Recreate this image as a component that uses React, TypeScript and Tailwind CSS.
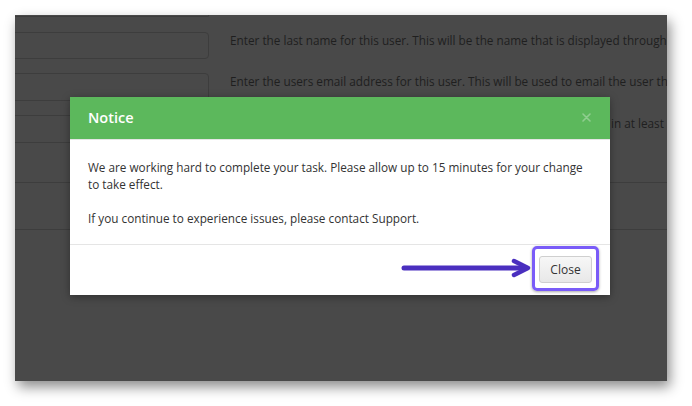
import React from "react";

export default function App() {
  const font = { fontFamily: '"Open Sans", "Liberation Sans", sans-serif' };
  return (
    <div className="w-[692px] h-[406px] bg-white overflow-hidden pt-[15px] pl-[15px]" style={font}>
      <div className="relative w-[652px] h-[366px] overflow-hidden bg-[#494949] shadow-[3px_6px_12px_rgba(0,0,0,0.45)]">
        {/* dimmed form */}
        <div className="flex flex-col text-[11.75px] leading-[17px] text-[#1f1f1f]">
          <div className="h-[17px]">
            <div className="w-[194px] h-[2px] border-b border-r border-[#3d3d3d] rounded-br-[4px]" />
          </div>
          <div className="flex items-start h-[27px]">
            <div className="w-[198px] -ml-[4px] h-[27px] shrink-0 border border-[#3d3d3d] rounded-[4px]" />
            <div className="ml-[21px] whitespace-nowrap">
              Enter the last name for this user. This will be the name that is displayed throughout the application.
            </div>
          </div>
          <div className="flex items-start h-[28px] mt-[14px]">
            <div className="w-[198px] -ml-[4px] h-[28px] shrink-0 border border-[#3d3d3d] rounded-[4px]" />
            <div className="ml-[21px] whitespace-nowrap">
              Enter the users email address for this user. This will be used to email the user their login details.
            </div>
          </div>
          <div className="flex items-start h-[28px] mt-[14px]">
            <div className="w-[198px] -ml-[4px] h-[28px] shrink-0 border border-[#3d3d3d] rounded-[4px]" />
            <div className="ml-[21px] whitespace-nowrap flex">
              <span className="inline-block w-[381px] overflow-hidden">Enter a password for this user. The password must conta</span>
              <span>in at least one number.</span>
            </div>
          </div>
          <div className="mt-[39px] border-t border-[#3d3d3d]" />
          <div className="mt-[46px] border-t border-[#3d3d3d]" />
        </div>

        {/* modal */}
        <div className="absolute left-[55px] top-[82px] w-[540px] bg-white shadow-[0_2px_8px_rgba(0,0,0,0.35)]">
          <div className="h-[43px] bg-[#5cb85c] border-b border-[#e5e5e5] flex items-center justify-between pl-[18px] pr-[19px]">
            <span className="text-[14.5px] text-white font-semibold">Notice</span>
            <svg width="9" height="9" viewBox="0 0 9 9" className="mb-[1px]">
              <path d="M1 1 L8 8 M8 1 L1 8" stroke="#8fcd8f" strokeWidth="1.6" strokeLinecap="round" />
            </svg>
          </div>
          <div className="px-[18px] pt-[19px] pb-[17px] text-[11.75px] leading-[17px] text-[#333]">
            <p>
              We are working hard to complete your task. Please allow up to 15 minutes for your change to take effect.
            </p>
            <p className="mt-[17px]">If you continue to experience issues, please contact Support.</p>
          </div>
          <div className="border-t border-[#e5e5e5] pt-[11px] pb-[12px] pr-[18px] flex justify-end">
            <div className="relative">
              <div className="absolute -left-[7px] -top-[10px] -right-[7px] -bottom-[8px] border-[3px] border-[#7a5cf8] rounded-[5px] shadow-[0_1px_3px_rgba(0,0,0,0.35)]" />
              <button className="relative h-[27px] w-[53px] rounded-[3px] border border-[#cfcfcf] bg-gradient-to-b from-[#f7f7f7] to-[#e8e8e8] text-[12px] text-[#333] flex items-center justify-center">
                Close
              </button>
            </div>
          </div>
          <svg
            className="absolute left-[331px] top-[161px]"
            width="132"
            height="20"
            viewBox="0 0 132 20"
          >
            <path d="M3 10 H125" stroke="#4a2fbf" strokeWidth="5" strokeLinecap="round" />
            <path d="M113 3 L127 10 L113 17" stroke="#4a2fbf" strokeWidth="4.5" strokeLinecap="round" strokeLinejoin="round" fill="none" />
          </svg>
        </div>
      </div>
    </div>
  );
}
